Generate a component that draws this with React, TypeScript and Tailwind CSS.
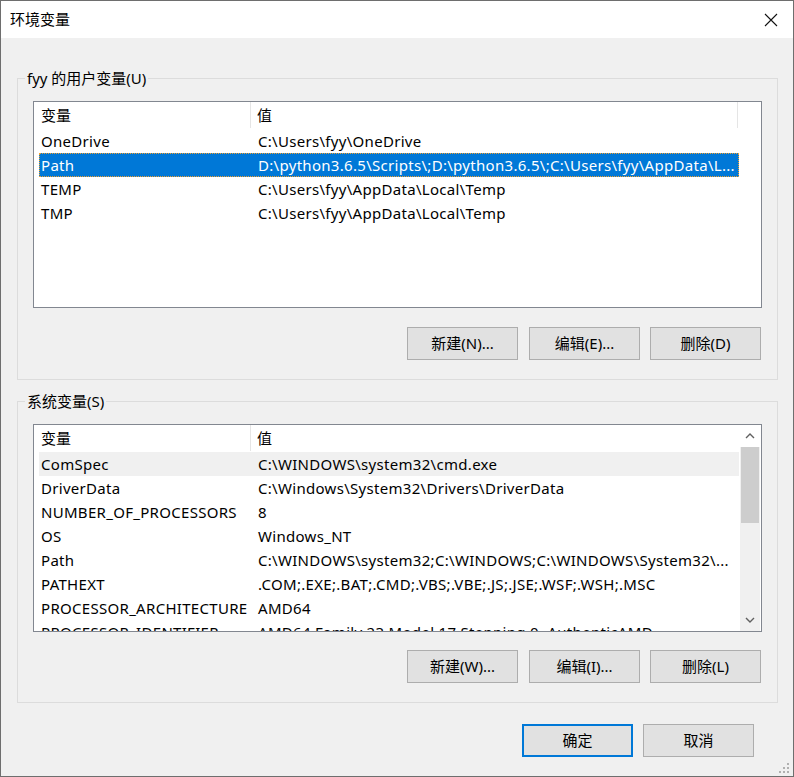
import React from "react";

const FONT = { fontFamily: '"Noto Sans", "Noto Sans CJK SC", sans-serif' };

type Row = { name: string; value: string };

const userVars: Row[] = [
  { name: "OneDrive", value: "C:\\Users\\fyy\\OneDrive" },
  { name: "Path", value: "D:\\python3.6.5\\Scripts\\;D:\\python3.6.5\\;C:\\Users\\fyy\\AppData\\L..." },
  { name: "TEMP", value: "C:\\Users\\fyy\\AppData\\Local\\Temp" },
  { name: "TMP", value: "C:\\Users\\fyy\\AppData\\Local\\Temp" },
];

const sysVars: Row[] = [
  { name: "ComSpec", value: "C:\\WINDOWS\\system32\\cmd.exe" },
  { name: "DriverData", value: "C:\\Windows\\System32\\Drivers\\DriverData" },
  { name: "NUMBER_OF_PROCESSORS", value: "8" },
  { name: "OS", value: "Windows_NT" },
  { name: "Path", value: "C:\\WINDOWS\\system32;C:\\WINDOWS;C:\\WINDOWS\\System32\\..." },
  { name: "PATHEXT", value: ".COM;.EXE;.BAT;.CMD;.VBS;.VBE;.JS;.JSE;.WSF;.WSH;.MSC" },
  { name: "PROCESSOR_ARCHITECTURE", value: "AMD64" },
  { name: "PROCESSOR_IDENTIFIER", value: "AMD64 Family 23 Model 17 Stepping 0, AuthenticAMD" },
];

function Btn({ label, primary, className = "" }: { label: string; primary?: boolean; className?: string }) {
  return (
    <div
      className={
        "w-[111px] h-[33px] flex items-center justify-center bg-[#e1e1e1] text-[15px] text-black " +
        (primary ? "border-2 border-[#0078d7] " : "border border-[#adadad] ") +
        className
      }
    >
      {label}
    </div>
  );
}

function Header({ scroll }: { scroll?: boolean }) {
  return (
    <div className="flex h-[26px] shrink-0 items-center text-[15px] bg-white">
      <div className="w-[217px] h-full pl-[7px] flex items-center border-r border-[#e5e5e5]">变量</div>
      <div className={"w-[487px] h-full pl-[6px] flex items-center " + (scroll ? "" : "border-r border-[#e5e5e5]")}>值</div>
    </div>
  );
}

function Rows({ rows, selected, hover }: { rows: Row[]; selected?: number; hover?: number }) {
  return (
    <div className="flex flex-col pl-[5px] pt-[1px]">
      {rows.map((r, i) => {
        const sel = i === selected;
        const hov = i === hover;
        return (
          <div
            key={r.name + i}
            className={
              "flex h-[24px] shrink-0 items-center w-[700px] text-[15px] tracking-[0.3px] whitespace-nowrap overflow-hidden " +
              (sel
                ? "bg-[#0078d7] text-white outline-1 outline-dotted outline-[#f0a030] -outline-offset-1 "
                : hov
                ? "bg-[#f0f0f0] text-black "
                : "text-black ")
            }
          >
            <div className="w-[217px] pl-[2px] shrink-0">{r.name}</div>
            <div className="pl-[2px] shrink-0">{r.value}</div>
          </div>
        );
      })}
    </div>
  );
}

function ScrollBar() {
  return (
    <div className="w-[20px] h-full bg-[#f0f0f0] flex flex-col shrink-0">
      <div className="h-[22px] flex items-center justify-center bg-white">
        <svg width="10" height="6" viewBox="0 0 10 6">
          <path d="M1 5 L5 1 L9 5" stroke="#606060" strokeWidth="1.4" fill="none" />
        </svg>
      </div>
      <div className="mx-[1px] h-[76px] bg-[#cdcdcd]" />
      <div className="flex-1" />
      <div className="h-[22px] flex items-center justify-center">
        <svg width="10" height="6" viewBox="0 0 10 6">
          <path d="M1 1 L5 5 L9 1" stroke="#606060" strokeWidth="1.4" fill="none" />
        </svg>
      </div>
    </div>
  );
}

function Group({
  label,
  children,
}: {
  label: string;
  children: React.ReactNode;
}) {
  return (
    <div className="relative ml-[16px] w-[761px] h-[302px] border border-[#dcdcdc] pt-[22px] pl-[15px]">
      <div className="absolute left-[7px] top-[-12px] px-[2px] bg-[#f0f0f0] text-[15px] leading-[22px] text-black">
        {label}
      </div>
      {children}
    </div>
  );
}

export default function App() {
  return (
    <div style={FONT} className="w-[794px] h-[777px] border border-[#6e6e6e] bg-[#f0f0f0] flex flex-col overflow-hidden">
      {/* Title bar */}
      <div className="h-[37px] bg-white flex items-center justify-between shrink-0">
        <div className="pl-[9px] text-[15px] text-black">环境变量</div>
        <div className="pr-[15px] flex items-center">
          <svg width="14" height="14" viewBox="0 0 14 14">
            <path d="M1 1 L13 13 M13 1 L1 13" stroke="#111" strokeWidth="1.1" />
          </svg>
        </div>
      </div>

      <div className="flex flex-col pt-[40px]">
        <Group label="fyy 的用户变量(U)">
          <div className="w-[729px] h-[207px] border border-[#828790] bg-white flex flex-col">
            <Header />
            <Rows rows={userVars} selected={1} />
          </div>
          <div className="flex mt-[19px] ml-[374px]">
            <Btn label="新建(N)..." />
            <Btn label="编辑(E)..." className="ml-[11px]" />
            <Btn label="删除(D)" className="ml-[10px]" />
          </div>
        </Group>

        <div className="h-[21px]" />

        <Group label="系统变量(S)">
          <div className="w-[729px] h-[208px] border border-[#828790] bg-white flex overflow-hidden">
            <div className="w-[706px] flex flex-col overflow-hidden">
              <Header scroll />
              <Rows rows={sysVars} hover={0} />
            </div>
            <ScrollBar />
          </div>
          <div className="flex mt-[18px] ml-[374px]">
            <Btn label="新建(W)..." />
            <Btn label="编辑(I)..." className="ml-[11px]" />
            <Btn label="删除(L)" className="ml-[10px]" />
          </div>
        </Group>

        <div className="flex mt-[21px] ml-[521px]">
          <Btn label="确定" primary />
          <Btn label="取消" className="ml-[10px]" />
        </div>
      </div>

      <div className="flex-1 flex items-end justify-end pr-[3px] pb-[2px]">
        <svg width="12" height="12" viewBox="0 0 12 12">
          <rect x="9" y="1" width="2" height="2" fill="#b0b0b0" />
          <rect x="5" y="5" width="2" height="2" fill="#b0b0b0" />
          <rect x="9" y="5" width="2" height="2" fill="#b0b0b0" />
          <rect x="1" y="9" width="2" height="2" fill="#b0b0b0" />
          <rect x="5" y="9" width="2" height="2" fill="#b0b0b0" />
          <rect x="9" y="9" width="2" height="2" fill="#b0b0b0" />
        </svg>
      </div>
    </div>
  );
}
